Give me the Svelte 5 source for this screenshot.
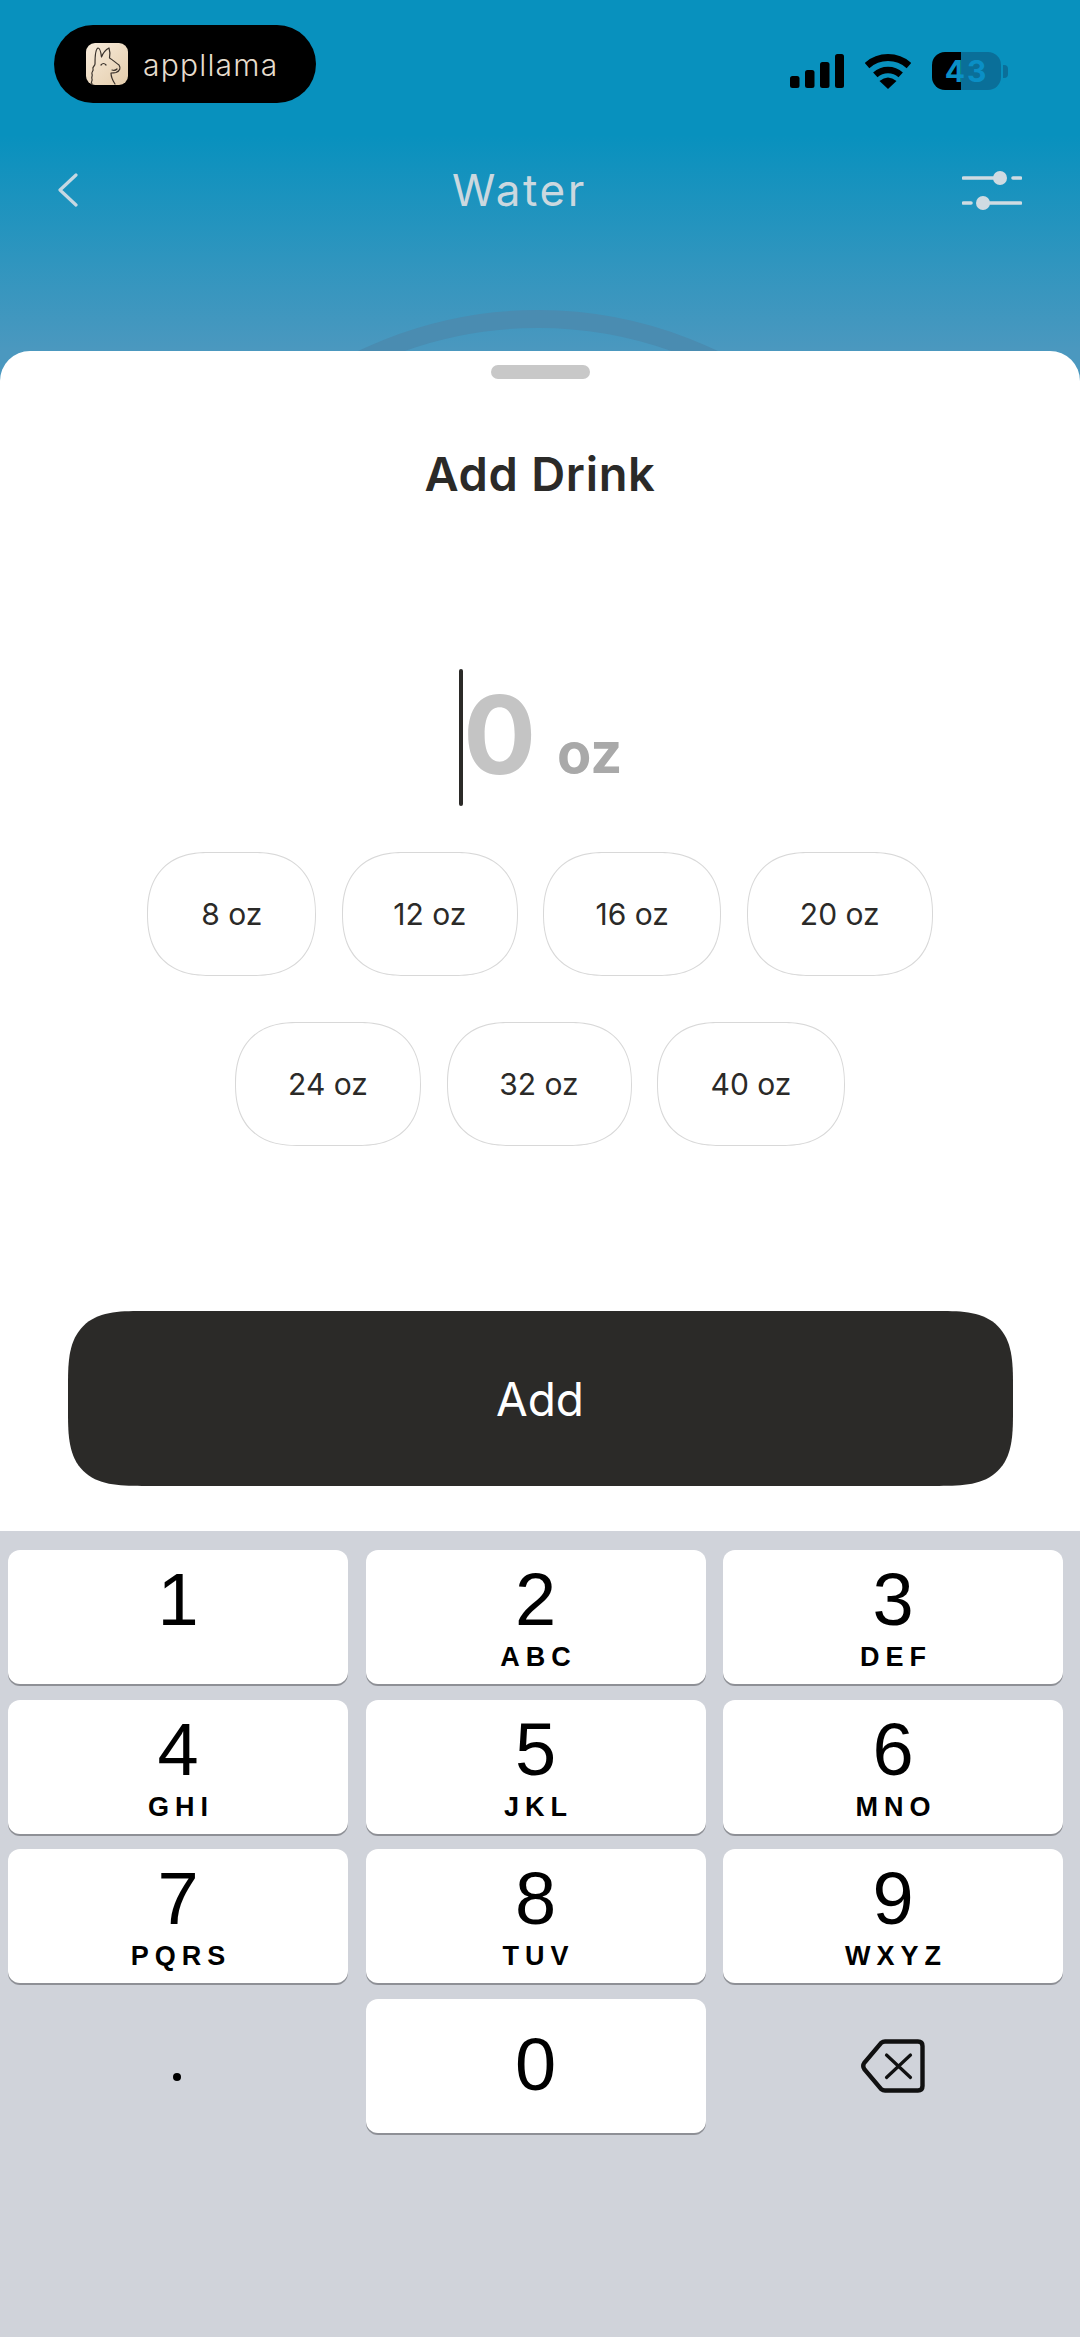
<script>
  const chips = [
    { label: "8 oz", width: 169 },
    { label: "12 oz", width: 176 },
    { label: "16 oz", width: 178 },
    { label: "20 oz", width: 186 },
    { label: "24 oz", width: 186 },
    { label: "32 oz", width: 185 },
    { label: "40 oz", width: 188 },
  ];

  const keys = [
    { digit: "1", letters: "" },
    { digit: "2", letters: "ABC" },
    { digit: "3", letters: "DEF" },
    { digit: "4", letters: "GHI" },
    { digit: "5", letters: "JKL" },
    { digit: "6", letters: "MNO" },
    { digit: "7", letters: "PQRS" },
    { digit: "8", letters: "TUV" },
    { digit: "9", letters: "WXYZ" },
  ];
</script>

<div class="screen">
  <header class="hero">
    <svg class="arc" width="1080" height="351" viewBox="0 0 1080 351" fill="none">
      <circle cx="538" cy="725" r="406" stroke="#4a8cb1" stroke-width="18" />
    </svg>

    <div class="status">
      <div class="pill">
        <svg class="llama" width="42" height="42" viewBox="0 0 42 42" fill="none">
          <defs>
            <linearGradient id="cream" x1="0" y1="0" x2="1" y2="1">
              <stop offset="0" stop-color="#f8ecdc" />
              <stop offset="1" stop-color="#e4cdac" />
            </linearGradient>
          </defs>
          <rect width="42" height="42" rx="9" fill="url(#cream)" />
          <path
            d="M6 41c-2-2 1-3 0-5s1-3 0-5 2-3 1-5 2-3 2-5C9 14 9 6 12 5c2 0 3 5 3.500 9 1.500-4 3.500-7 7.500-9 1 3 1 7 .5 10 3.500 2 6.500 5 9.500 7 2 3 1 6-3 7.500-2 .5-4 .5-5 .5 0 4 2 8 4 11"
            stroke="#3a322b"
            stroke-width="1.2"
            stroke-linecap="round"
            stroke-linejoin="round"
          />
          <path d="M15 22q2.500-3 5 0M26 27q3 1 5-1" stroke="#3a322b" stroke-width="1.2" stroke-linecap="round" />
        </svg>
        <span class="wordmark">appllama</span>
      </div>

      <div class="indicators">
        <svg width="54" height="34" viewBox="0 0 54 34" fill="#000">
          <rect x="0" y="22" width="9.5" height="12" rx="2.5" />
          <rect x="15" y="16" width="9.5" height="18" rx="2.5" />
          <rect x="30" y="8" width="9.5" height="26" rx="2.5" />
          <rect x="45" y="0" width="9" height="34" rx="2.5" />
        </svg>
        <svg class="wifi" width="46" height="35" viewBox="0 0 46 35" fill="none">
          <path d="M2 11.6A31.5 31.5 0 0 1 44 11.6" stroke="#000" stroke-width="7" />
          <path d="M10.3 20.9A19 19 0 0 1 35.7 20.9" stroke="#000" stroke-width="6.5" />
          <path d="M23 35L14.5 27Q23 20 31.5 27Z" fill="#000" />
        </svg>
        <div class="battery">43</div>
        <div class="battery-cap"></div>
      </div>
    </div>

    <nav class="nav">
      <svg width="20" height="34" viewBox="0 0 20 34" fill="none">
        <path d="M18 2L2 17L18 32" stroke="#c6d8e2" stroke-width="3.2" stroke-linecap="round" stroke-linejoin="round" />
      </svg>
      <h2 class="nav-title">Water</h2>
      <svg width="60" height="40" viewBox="0 0 60 40" fill="none">
        <path d="M1.5 8H38M51 8H58.5M1.5 33H9M22 33H58.5" stroke="#cfdbe2" stroke-width="3.6" stroke-linecap="round" />
        <circle cx="38" cy="8" r="7" fill="#cfdbe2" />
        <circle cx="21" cy="33" r="7" fill="#cfdbe2" />
      </svg>
    </nav>
  </header>

  <section class="sheet">
    <div class="handle"></div>
    <h1 class="title">Add Drink</h1>

    <div class="amount">
      <span class="caret"></span>
      <span class="zero">0</span>
      <span class="unit">oz</span>
    </div>

    <div class="chips">
      {#each chips as chip}
        <button class="chip" style:width="{chip.width}px">{chip.label}</button>
      {/each}
    </div>

    <button class="add">Add</button>
  </section>

  <section class="keyboard">
    {#each keys as key}
      <div class="key">
        <span class="digit">{key.digit}</span>
        <span class="letters">{key.letters}</span>
      </div>
    {/each}
    <div class="key-flat"><span class="dot"></span></div>
    <div class="key zero-key"><span class="digit">0</span></div>
    <div class="key-flat">
      <svg width="64" height="54" viewBox="0 0 64 54" fill="none">
        <path
          d="M24 2.5H57Q61.500 2.500 61.500 7V47Q61.500 51.500 57 51.500H24Q22 51.500 20 50L3.500 30.500Q1 27 3.500 23.500L20 4Q22 2.500 24 2.500Z"
          stroke="#111"
          stroke-width="4.4"
        />
        <path d="M25.500 16L49.500 38.500M49.500 16L25.500 38.500" stroke="#111" stroke-width="3.200" stroke-linecap="round" />
      </svg>
    </div>
  </section>
</div>

<style>
  :global(body) {
    margin: 0;
    background: #d0d3da;
  }

  .screen {
    width: 1080px;
    height: 2337px;
    display: flex;
    flex-direction: column;
    overflow: hidden;
    font-family: Inter, "Noto Sans", sans-serif;
    background: linear-gradient(#0891be 0, #0891be 135px, #4b98bf 351px, #4b98bf 400px);
  }

  .hero {
    position: relative;
    height: 351px;
    flex: none;
    box-sizing: border-box;
    padding-top: 25px;
  }

  .arc {
    position: absolute;
    left: 0;
    top: 0;
  }

  .status {
    position: relative;
    display: flex;
    justify-content: space-between;
    align-items: flex-start;
    padding: 0 72px 0 54px;
  }

  .pill {
    width: 262px;
    height: 78px;
    box-sizing: border-box;
    padding-left: 32px;
    display: flex;
    align-items: center;
    gap: 15px;
    background: #000;
    border-radius: 39px;
  }

  .llama {
    margin-top: -1px;
  }

  .wordmark {
    font-size: 30px;
    font-weight: 300;
    letter-spacing: 1.2px;
    color: #e6dccd;
    margin-top: 2px;
  }

  .indicators {
    display: flex;
    align-items: center;
    margin-top: 27px;
  }

  .wifi {
    margin-left: 21px;
  }

  .battery {
    width: 69px;
    height: 38px;
    margin-left: 21px;
    border-radius: 13px;
    background: linear-gradient(90deg, #000 29px, #0a6f99 29px);
    color: #0a8fc6;
    font-size: 30px;
    font-weight: 700;
    letter-spacing: 2px;
    line-height: 38px;
    text-align: center;
  }

  .battery-cap {
    width: 5px;
    height: 13px;
    margin-left: 2px;
    border-radius: 0 4px 4px 0;
    background: #0a6f99;
  }

  .nav {
    position: relative;
    margin-top: 60px;
    height: 54px;
    padding: 0 58px;
    display: flex;
    justify-content: space-between;
    align-items: center;
  }

  .nav-title {
    margin: 0 0 0 -1px;
    font-size: 44px;
    font-weight: 400;
    letter-spacing: 2.6px;
    color: #cbd8df;
  }

  .sheet {
    position: relative;
    height: 1180px;
    flex: none;
    box-sizing: border-box;
    padding-top: 14px;
    display: flex;
    flex-direction: column;
    align-items: center;
    background: #fff;
    border-radius: 30px 30px 0 0;
  }

  .handle {
    width: 99px;
    height: 14px;
    border-radius: 7px;
    background: #c8c8c8;
  }

  .title {
    margin: 67px 0 0;
    font-size: 47px;
    line-height: 56px;
    font-weight: 600;
    letter-spacing: 0.7px;
    color: #2b2a28;
  }

  .amount {
    margin: 167px 0 0 1px;
    height: 137px;
    display: flex;
    align-items: flex-start;
  }

  .caret {
    width: 4.5px;
    height: 137px;
    border-radius: 2px;
    background: #2b2a28;
  }

  .zero {
    margin-top: -2px;
    font-size: 108px;
    line-height: 136px;
    font-weight: 700;
    color: #c4c4c4;
  }

  .unit {
    margin: 39px 0 0 21px;
    font-size: 56px;
    line-height: 90px;
    font-weight: 700;
    color: #a9a9a9;
  }

  .chips {
    width: 800px;
    margin-top: 46px;
    display: flex;
    flex-wrap: wrap;
    justify-content: center;
    gap: 46px 25.5px;
  }

  .chip {
    height: 124px;
    padding: 0;
    background: #fff;
    border: 1.5px solid #d8d8d8;
    border-radius: 62px;
    corner-shape: superellipse(1.25);
    font-family: inherit;
    font-size: 30px;
    color: #2b2a28;
  }

  .add {
    width: 945px;
    height: 175px;
    margin-top: 165px;
    border: 0;
    border-radius: 74px;
    corner-shape: superellipse(1.6);
    background: #2b2a28;
    color: #fff;
    font-family: inherit;
    font-size: 46px;
    font-weight: 400;
  }

  .keyboard {
    flex: 1;
    box-sizing: border-box;
    padding: 19px 16px 0 8px;
    display: grid;
    grid-template-columns: repeat(3, 340px);
    grid-auto-rows: 134px;
    column-gap: 17.5px;
    row-gap: 15.5px;
    align-content: start;
    background: #d0d3da;
    font-family: "Liberation Sans", Arial, sans-serif;
    color: #000;
  }

  .key {
    display: flex;
    flex-direction: column;
    align-items: center;
    box-sizing: border-box;
    padding-top: 13px;
    background: #fff;
    border-radius: 12px;
    box-shadow: 0 2px 0 #8e9096;
  }

  .digit {
    font-size: 74px;
    line-height: 74px;
  }

  .letters {
    margin-top: 8px;
    font-size: 27px;
    line-height: 24px;
    font-weight: 700;
    letter-spacing: 6px;
    text-indent: 6px;
  }

  .zero-key {
    padding-top: 29px;
  }

  .key-flat {
    display: flex;
    justify-content: center;
    align-items: center;
  }

  .key-flat svg {
    margin-left: -1px;
  }

  .dot {
    width: 8px;
    height: 8px;
    margin: 22px 0 0 -2px;
    border-radius: 50%;
    background: #000;
  }
</style>
